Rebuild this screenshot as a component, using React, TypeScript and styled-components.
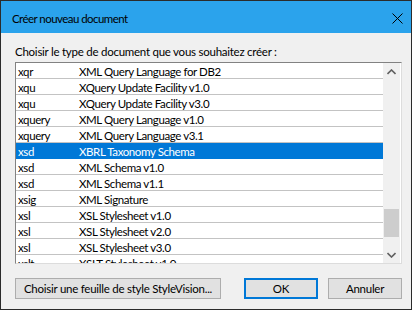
import React from "react";
import styled, { createGlobalStyle } from "styled-components";

const FONT = `"Segoe UI", Lato, "Noto Sans", sans-serif`;

type DocType = { ext: string; name: string };

const docTypes: DocType[] = [
  { ext: "xqr", name: "XML Query Language for DB2" },
  { ext: "xqu", name: "XQuery Update Facility v1.0" },
  { ext: "xqu", name: "XQuery Update Facility v3.0" },
  { ext: "xquery", name: "XML Query Language v1.0" },
  { ext: "xquery", name: "XML Query Language v3.1" },
  { ext: "xsd", name: "XBRL Taxonomy Schema" },
  { ext: "xsd", name: "XML Schema v1.0" },
  { ext: "xsd", name: "XML Schema v1.1" },
  { ext: "xsig", name: "XML Signature" },
  { ext: "xsl", name: "XSL Stylesheet v1.0" },
  { ext: "xsl", name: "XSL Stylesheet v2.0" },
  { ext: "xsl", name: "XSL Stylesheet v3.0" },
  { ext: "xslt", name: "XSLT Stylesheet v1.0" },
];

const SELECTED = 5;
// scroll track is 165px, thumb 28px; list is scrolled most of the way down
const TRACK = 165;
const THUMB = 28;
const SCROLL_FRACTION = 0.94;

const GlobalStyle = createGlobalStyle`
  html, body {
    margin: 0;
    background: #ffffff;
  }
  body {
    font-family: ${FONT};
    font-size: 11.5px;
    letter-spacing: -0.25px;
    color: #000000;
  }
`;

const App = () => {
  const thumbTop = Math.round((TRACK - THUMB) * SCROLL_FRACTION);

  return (
    <>
      <GlobalStyle />
      <Window>
        <TitleBar>
          <Title>Créer nouveau document</Title>
          <CloseButton>
            <svg width="11" height="11" viewBox="0 0 11 11">
              <path d="M0.5 0.5 L10.5 10.5 M10.5 0.5 L0.5 10.5" stroke="#000" strokeWidth="1" fill="none" />
            </svg>
          </CloseButton>
        </TitleBar>
        <Body>
          <Label>Choisir le type de document que vous souhaitez créer :</Label>
          <ListBox>
            <Rows>
              {docTypes.map((d, i) => (
                <Row key={i} $selected={i === SELECTED}>
                  <ExtCell>{d.ext}</ExtCell>
                  <NameCell>{d.name}</NameCell>
                </Row>
              ))}
            </Rows>
            <ScrollBar>
              <ArrowButton>
                <svg width="9" height="6" viewBox="0 0 9 6">
                  <path d="M0.5 5 L4.5 1 L8.5 5" stroke="#606060" strokeWidth="1.6" fill="none" />
                </svg>
              </ArrowButton>
              <Track>
                <Thumb style={{ marginTop: thumbTop }} />
              </Track>
              <ArrowButton>
                <svg width="9" height="6" viewBox="0 0 9 6">
                  <path d="M0.5 1 L4.5 5 L8.5 1" stroke="#606060" strokeWidth="1.6" fill="none" />
                </svg>
              </ArrowButton>
            </ScrollBar>
          </ListBox>
          <ButtonRow>
            <Button $width={206}>Choisir une feuille de style StyleVision...</Button>
            <Spacer />
            <Button $width={74} $default>OK</Button>
            <Button $width={74}>Annuler</Button>
          </ButtonRow>
        </Body>
      </Window>
    </>
  );
};

const Window = styled.div`
  width: 412px;
  height: 310px;
  box-sizing: border-box;
  border: 1px solid #2b2b2b;
  background: #f0f0f0;
  display: flex;
  flex-direction: column;
`;

const TitleBar = styled.div`
  height: 32px;
  box-sizing: border-box;
  flex: none;
  background: #2ba3ec;
  display: flex;
  align-items: center;
  justify-content: space-between;
  padding: 3px 8px 0 11px;
`;

const Title = styled.span`
  color: #000000;
  letter-spacing: -0.55px;
`;

const CloseButton = styled.div`
  width: 11px;
  height: 11px;
  display: flex;
`;

const Body = styled.div`
  display: flex;
  flex-direction: column;
  padding: 11px 10px 0 14px;
`;

const Label = styled.div`
  line-height: 16px;
  height: 16px;
  margin-bottom: 2px;
`;

const ListBox = styled.div`
  width: 387px;
  height: 202px;
  box-sizing: border-box;
  border-top: 1px solid #828282;
  border-left: 1px solid #828282;
  border-right: 1px solid #dcdcdc;
  border-bottom: 1px solid #dcdcdc;
  background: #ffffff;
  display: flex;
`;

const Rows = styled.div`
  width: 367px;
  flex: none;
  overflow: hidden;
`;

const Row = styled.div<{ $selected?: boolean }>`
  display: grid;
  grid-template-columns: 61px 1fr;
  height: 16px;
  box-sizing: border-box;
  padding: 1px 0 0 2px;
  line-height: 15px;
  letter-spacing: -0.4px;
  white-space: nowrap;
  border-bottom: 1px solid ${(p) => (p.$selected ? "#0078d7" : "#c3c3c3")};
  background: ${(p) => (p.$selected ? "#0078d7" : "transparent")};
  color: ${(p) => (p.$selected ? "#ffffff" : "#000000")};
`;

const ExtCell = styled.span``;

const NameCell = styled.span``;

const ScrollBar = styled.div`
  width: 17px;
  flex: none;
  background: #f0f0f0;
  display: flex;
  flex-direction: column;
`;

const ArrowButton = styled.div`
  height: 17px;
  flex: none;
  display: flex;
  align-items: center;
  justify-content: center;
`;

const Track = styled.div`
  flex: 1;
  display: flex;
  flex-direction: column;
`;

const Thumb = styled.div`
  height: ${THUMB}px;
  margin-left: 1px;
  margin-right: 1px;
  background: #cdcdcd;
`;

const ButtonRow = styled.div`
  display: flex;
  gap: 10px;
  margin-top: 14px;
  width: 387px;
`;

const Spacer = styled.div`
  flex: 1;
`;

const Button = styled.button<{ $width: number; $default?: boolean }>`
  width: ${(p) => p.$width}px;
  height: 21px;
  box-sizing: border-box;
  padding: 0;
  font-family: ${FONT};
  font-size: 11.5px;
  letter-spacing: -0.25px;
  color: #000000;
  background: #e1e1e1;
  border: ${(p) => (p.$default ? "2px solid #0078d7" : "1px solid #adadad")};
  border-radius: 0;
  white-space: nowrap;
`;

export default App;
